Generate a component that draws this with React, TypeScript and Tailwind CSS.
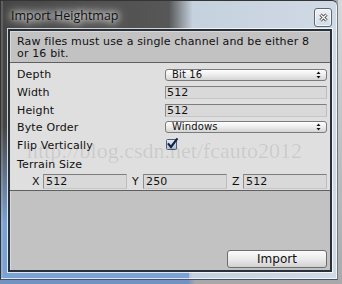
import React from "react";

function Arrows() {
  return (
    <svg width="5" height="8" viewBox="0 0 5 8" className="shrink-0">
      <path d="M2.5 0.5 L4.5 3 L0.5 3 Z" fill="#111" />
      <path d="M0.5 5 L4.5 5 L2.5 7.5 Z" fill="#111" />
    </svg>
  );
}

function Dropdown({ value }: { value: string }) {
  return (
    <div className="h-[12px] w-full flex items-center justify-between pl-[6px] pr-[5px] rounded-[3px] border border-[#7b7b7b] bg-[linear-gradient(to_bottom,#ffffff,#ececec_50%,#d4d4d4)] text-[10px] leading-none text-[#111]">
      <span>{value}</span>
      <Arrows />
    </div>
  );
}

function Field({ value, tall }: { value: string; tall?: boolean }) {
  return (
    <div
      className={
        tall
          ? "h-[15px] w-full flex items-center pl-[2px] border border-t-[#7e7e7e] border-l-[#8e8e8e] border-r-[#bcbcbc] border-b-[#c6c6c6] bg-[#d9d9d9] text-[11px] leading-none text-[#111]"
          : "h-[13px] w-full flex items-center pl-[1px] border border-t-[#7e7e7e] border-l-[#8e8e8e] border-r-[#bcbcbc] border-b-[#c6c6c6] bg-[#d9d9d9] text-[11px] leading-none text-[#111]"
      }
    >
      {value}
    </div>
  );
}

function Checkbox() {
  return (
    <svg width="14" height="13" viewBox="0 0 14 13">
      <defs>
        <linearGradient id="cb" x1="0" y1="0" x2="0" y2="1">
          <stop offset="0" stopColor="#e4ecf6" />
          <stop offset="1" stopColor="#a9bfdc" />
        </linearGradient>
      </defs>
      <rect x="0.5" y="1.5" width="10" height="10" rx="1" fill="url(#cb)" stroke="#4f5f76" />
      <path d="M2.6 6.2 L5 9 L10.8 1.2" fill="none" stroke="#16223d" strokeWidth="2.1" strokeLinecap="square" />
    </svg>
  );
}

function Row({ label, h, children }: { label: string; h: string; children?: React.ReactNode }) {
  return (
    <div className={"flex items-center " + h}>
      <div className="w-[155px] pl-[7px] shrink-0">{label}</div>
      <div className="flex-1 pr-[3px] flex items-center">{children}</div>
    </div>
  );
}

export default function App() {
  return (
    <div className="relative w-[342px] h-[284px] overflow-hidden [background:linear-gradient(to_bottom,#d8d8d8,#a9a9a9)_right_top/4px_100%_no-repeat,linear-gradient(to_right,#7392c2_0%,#7392c2_55%,#a8a8a8_57%,#a8a8a8_100%)]">
      <div className="w-[338px] h-[280px] flex flex-col border border-[#343434] border-r-[#6f7985] border-b-[#43556e] rounded-tr-[6px] shadow-[inset_-1px_-1px_0_rgba(255,255,255,0.7),inset_2px_0_0_rgba(255,255,255,0.15)] [background:linear-gradient(to_bottom,rgba(124,162,211,0)_45%,#7ca2d3_80%)_left_top/56%_100%_no-repeat,linear-gradient(to_right,#454545_0%,#575757_50%,#c5d1de_57%,#d0dae5_100%)]">
        <div className="h-[27px] shrink-0 flex items-start justify-between pl-[10px] pr-[5px]">
          <span className="pt-[6px] text-[12.5px] leading-[17px] text-[#111] font-['Open_Sans',sans-serif] [text-shadow:0_0_6px_#fff,0_0_10px_#fff,0_0_14px_rgba(255,255,255,0.8)]">
            Import Heightmap
          </span>
          <div className="mt-[7px] w-[18px] h-[19px] rounded-[3px] border border-[#5b6878] bg-[linear-gradient(to_bottom,#eef2f7,#d3dbe6)] flex items-center justify-center shadow-[inset_0_0_0_1px_rgba(255,255,255,0.7)]">
            <svg width="9" height="9" viewBox="0 0 9 9">
              <path d="M1.5 1.5 L7.5 7.5 M7.5 1.5 L1.5 7.5" stroke="#3b3b3b" strokeWidth="3" />
              <path d="M1.5 1.5 L7.5 7.5 M7.5 1.5 L1.5 7.5" stroke="#fff" strokeWidth="1.3" />
            </svg>
          </div>
        </div>
        <div className="flex-1 min-h-0 flex pl-[6px] pr-[4px] pb-[6px]">
          <div className="flex-1 border border-[rgba(255,255,255,0.75)]">
            <div className="h-full flex flex-col border-2 border-[#28303b] bg-[#c2c2c2] shadow-[inset_1px_1px_0_#d9d9d9] font-['DejaVu_Sans',sans-serif] text-[11px] tracking-[0.15px] text-[#111]">
              <div className="pt-[5px] pb-[2px] pl-[7px] leading-[12px]">
                Raw files must use a single channel and be either 8
                <br />
                or 16 bit.
              </div>
              <div className="border-y border-[#5f5f5f] bg-[#dfdfdf] pt-[3px] leading-none">
                <Row label="Depth" h="h-[17px]">
                  <Dropdown value="Bit 16" />
                </Row>
                <Row label="Width" h="h-[19px]">
                  <Field value="512" />
                </Row>
                <Row label="Height" h="h-[17px]">
                  <Field value="512" />
                </Row>
                <Row label="Byte Order" h="h-[16px]">
                  <Dropdown value="Windows" />
                </Row>
                <Row label="Flip Vertically" h="h-[20px]">
                  <div className="pl-[1px] -mt-[2px]">
                    <Checkbox />
                  </div>
                </Row>
                <Row label="Terrain Size" h="h-[18px]" />
                <div className="h-[17px] pl-[22px] pr-[3px] grid grid-cols-3 gap-[5px] items-center">
                  <div className="flex items-center">
                    <span className="w-[11px] shrink-0">X</span>
                    <Field value="512" tall />
                  </div>
                  <div className="flex items-center">
                    <span className="w-[11px] shrink-0">Y</span>
                    <Field value="250" tall />
                  </div>
                  <div className="flex items-center">
                    <span className="w-[11px] shrink-0">Z</span>
                    <Field value="512" tall />
                  </div>
                </div>
              </div>
              <div className="flex-1 flex items-end justify-end pr-[3px] pb-[2px]">
                <button className="w-[100px] h-[18px] rounded-[3px] border border-[#6e6e6e] bg-[linear-gradient(to_bottom,#fbfbfb,#ebebeb_50%,#d2d2d2)] text-[12px] leading-none tracking-normal text-[#111] flex items-center justify-center">
                  Import
                </button>
              </div>
            </div>
          </div>
        </div>
      </div>
      <div className="absolute left-[27px] top-[140px] text-[22px] leading-[22px] text-black/10 font-['Liberation_Serif',serif] whitespace-nowrap pointer-events-none">
        http://blog.csdn.net/fcauto2012
      </div>
    </div>
  );
}
